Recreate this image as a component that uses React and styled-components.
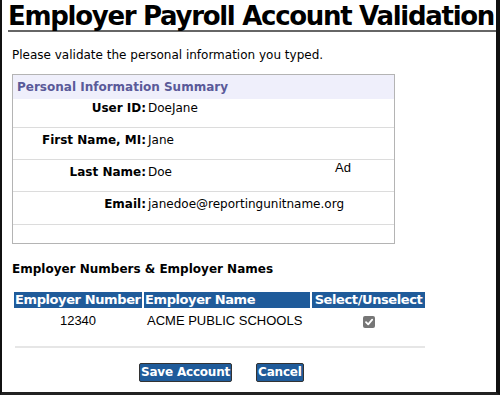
import React from 'react';
import styled, { createGlobalStyle } from 'styled-components';

const GlobalStyle = createGlobalStyle`
    html, body {
        margin: 0;
        padding: 0;
        background: #ffffff;
    }
    body {
        font-family: "DejaVu Sans", Verdana, sans-serif;
        color: #000;
    }
`

const Frame = styled.div`
    width: 500px;
    height: 395px;
    box-sizing: border-box;
    border-left: 2px solid #111;
    border-right: 4px solid #111;
    border-bottom: 3px solid #222;
    overflow: hidden;
    padding: 0 0 0 6px;
`

const Title = styled.h1`
    margin: 0;
    padding: 3px 0 0 0;
    height: 27px;
    font-size: 26px;
    line-height: 27px;
    font-weight: bold;
    letter-spacing: -1.3px;
    border-bottom: 2px solid #666;
    white-space: nowrap;
`

const Intro = styled.p`
    margin: 15px 0 0 4px;
    font-size: 12px;
    line-height: 16px;
`

const Summary = styled.div`
    margin: 11px 0 0 4px;
    width: 381px;
    border: 1px solid #b4b4b4;
`

const SummaryHead = styled.div`
    height: 24px;
    line-height: 24px;
    background: #efeffb;
    color: #5a5a99;
    font-weight: bold;
    font-size: 12px;
    padding-left: 4px;
`

const InfoRow = styled.div`
    display: grid;
    grid-template-columns: 133px 1fr;
    box-sizing: border-box;
    height: ${p => p.h}px;
    padding-top: ${p => p.pt || 0}px;
    border-bottom: ${p => (p.last ? 'none' : '1px solid #dcdcdc')};
    font-size: 12px;
    line-height: 16px;
    position: relative;
`

const Label = styled.span`
    font-weight: bold;
    text-align: right;
`

const Value = styled.span`
    padding-left: 2px;
`

const Stray = styled.span`
    position: absolute;
    left: 322px;
    top: 0;
    font-family: "Liberation Sans", Arial, sans-serif;
    font-size: 13px;
`

const SectionTitle = styled.h2`
    margin: 17px 0 0 4px;
    font-size: 12px;
    line-height: 16px;
    font-weight: bold;
`

const EmpTable = styled.table`
    margin: 15px 0 0 4px;
    border-collapse: separate;
    border-spacing: 2px 0;
    font-size: 13px;
`

const HeadCell = styled.th`
    box-sizing: border-box;
    background: #1f5b9a;
    color: #fff;
    font-weight: bold;
    font-size: 13px;
    line-height: 16px;
    letter-spacing: -0.4px;
    padding: 0 1px;
    width: ${p => p.w}px;
    text-align: ${p => p.align || 'left'};
    white-space: nowrap;
`

const Cell = styled.td`
    font-family: "Liberation Sans", Arial, sans-serif;
    font-size: 13px;
    line-height: 18px;
    padding: 4px 3px 0;
    text-align: ${p => p.align || 'left'};
`

const Check = styled.span`
    display: inline-flex;
    align-items: center;
    justify-content: center;
    width: 12px;
    height: 12px;
    border-radius: 2px;
    background: #767676;
    vertical-align: middle;
`

const Rule = styled.div`
    margin: 16px 0 0 7px;
    width: 410px;
    height: 2px;
    background: #e6e6e6;
`

const Buttons = styled.div`
    display: flex;
    gap: 24px;
    margin: 15px 0 0 131px;
`

const Button = styled.button`
    font-family: "DejaVu Sans", Verdana, sans-serif;
    font-size: 12px;
    font-weight: bold;
    letter-spacing: -0.2px;
    color: #fff;
    background: #1f5b9a;
    border: 1px solid #333;
    border-radius: 2px;
    padding: 0 1px;
    height: 19px;
    line-height: 17px;
    cursor: pointer;
`

const rows = [
    { label: 'User ID:', value: 'DoeJane', h: 29, pt: 1 },
    { label: 'First Name, MI:', value: 'Jane', h: 32, pt: 4 },
    { label: 'Last Name:', value: 'Doe', extra: 'Ad', h: 32, pt: 4 },
    { label: 'Email:', value: 'janedoe@reportingunitname.org', h: 33, pt: 4 },
]

function App() {
    return (
        <>
            <GlobalStyle />
            <Frame>
                <Title>Employer Payroll Account Validation</Title>
                <Intro>Please validate the personal information you typed.</Intro>
                <Summary>
                    <SummaryHead>Personal Information Summary</SummaryHead>
                    {rows.map(r => (
                        <InfoRow key={r.label} h={r.h} pt={r.pt}>
                            <Label>{r.label}</Label>
                            <Value>{r.value}</Value>
                            {r.extra && <Stray>{r.extra}</Stray>}
                        </InfoRow>
                    ))}
                    <InfoRow h={18} last />
                </Summary>
                <SectionTitle>Employer Numbers &amp; Employer Names</SectionTitle>
                <EmpTable>
                    <thead>
                        <tr>
                            <HeadCell w={128}>Employer Number</HeadCell>
                            <HeadCell w={166}>Employer Name</HeadCell>
                            <HeadCell w={113} align="center">Select/Unselect</HeadCell>
                        </tr>
                    </thead>
                    <tbody>
                        <tr>
                            <Cell align="center">12340</Cell>
                            <Cell>ACME PUBLIC SCHOOLS</Cell>
                            <Cell align="center">
                                <Check>
                                    <svg width="10" height="10" viewBox="0 0 10 10">
                                        <path d="M2 5.2 L4.2 7.4 L8.2 2.6" fill="none" stroke="#fff" strokeWidth="1.8" strokeLinecap="round" strokeLinejoin="round" />
                                    </svg>
                                </Check>
                            </Cell>
                        </tr>
                    </tbody>
                </EmpTable>
                <Rule />
                <Buttons>
                    <Button>Save Account</Button>
                    <Button>Cancel</Button>
                </Buttons>
            </Frame>
        </>
    );
}

export default App;
